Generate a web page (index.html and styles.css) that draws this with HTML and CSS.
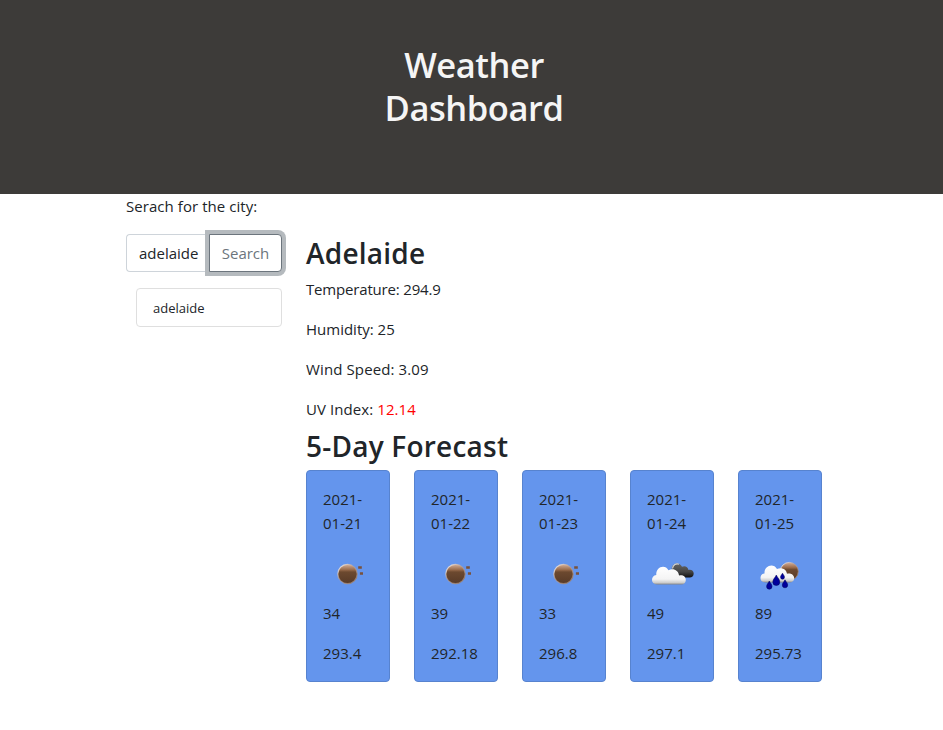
FILE: index.html
```html
<!DOCTYPE html>
<html lang="en">
<head>
<meta charset="utf-8">
<title>Weather Dashboard</title>
<link rel="stylesheet" href="styles.css">
</head>
<body>
<svg class="defs" width="0" height="0" aria-hidden="true">
  <defs>
    <linearGradient id="brown" x1="0" y1="0" x2="0" y2="1">
      <stop offset="0" stop-color="#d3b09b"/><stop offset=".28" stop-color="#9a6c4c"/><stop offset=".4" stop-color="#6c492f"/><stop offset="1" stop-color="#573a27"/>
    </linearGradient>
    <linearGradient id="rim" x1="0" y1="0" x2="1" y2="1">
      <stop offset="0" stop-color="#fff"/><stop offset=".45" stop-color="#c8a58e" stop-opacity=".5"/><stop offset="1" stop-color="#8d7464"/>
    </linearGradient>
    <linearGradient id="white" x1="0" y1="0" x2="0" y2="1">
      <stop offset="0" stop-color="#fff"/><stop offset=".7" stop-color="#f4f4f4"/><stop offset=".9" stop-color="#ccc"/><stop offset="1" stop-color="#888"/>
    </linearGradient>
    <linearGradient id="dark" x1="0" y1="0" x2="0" y2="1">
      <stop offset="0" stop-color="#666"/><stop offset=".6" stop-color="#444"/><stop offset="1" stop-color="#111"/>
    </linearGradient>
    <symbol id="sun" viewBox="0 0 50 50">
      <circle cx="24.500" cy="23" r="9.700" fill="url(#brown)" stroke="url(#rim)" stroke-width="1.200"/>
      <path d="M35.200 15.200h3.600v2.600h-3.600zM36.900 21.200h3.100v2.600h-3.100z" fill="#79523b"/>
    </symbol>
    <symbol id="clouds" viewBox="0 0 50 50">
      <path d="M25 19C24 15 27 12.500 30 12.500c2.500 0 4 1.300 5 3.200c3-1.500 6 .3 6.500 3.300c3-.7 5.200 1.100 5.200 3.500c0 2.500-1.700 4-4 4H32z" fill="url(#dark)"/>
      <path d="M25.500 17.500c.5-3.500 3.500-5.500 6.500-4.200" fill="none" stroke="#d5d5d5" stroke-width="1.200"/>
      <path d="M10 33.500C3.500 33.500 3.500 24.500 9.300 24C8.500 16 18 12.500 21.500 19.200C26 16.800 31.500 19 32 24.500C36.500 23.200 38.800 26 38.800 29C38.800 31.700 37 33.500 34.500 33.500z" fill="url(#white)"/>
    </symbol>
    <symbol id="rain" viewBox="0 0 50 50">
      <circle cx="34.300" cy="20.400" r="9" fill="url(#brown)" stroke="url(#rim)" stroke-width="1"/>
      <path d="M10.500 31.500C4 31.500 4 23 9.500 22.500C9 14.500 18.500 11.500 22 18C26.500 15.800 31.500 18 32 22.800C36.500 21.800 39.200 24.500 39.200 27.300C39.200 30 37.300 31.500 34.700 31.500z" fill="url(#white)"/>
      <path d="M14.300 30c1 2 2.700 3.600 2.700 5.500a2.700 2.700 0 0 1-5.400 0c0-1.900 1.700-3.500 2.700-5.500zM21.300 24c1.300 2.800 3.500 4.500 3.500 7a3.500 3.500 0 0 1-7 0c0-2.500 2.200-4.200 3.500-7zM27.500 22.200c.8 1.600 2 2.500 2 4a2 2 0 0 1-4 0c0-1.500 1.200-2.400 2-4zM30 28.800c1 2 2.700 3.400 2.700 5.300a2.700 2.700 0 0 1-5.400 0c0-1.900 1.700-3.300 2.700-5.300z" fill="#00009b" stroke="#000054" stroke-width=".5"/>
    </symbol>
  </defs>
</svg>
<header class="banner"><h1>Weather<br>Dashboard</h1></header>
<main class="container">
  <aside class="sidebar">
    <p>Serach for the city:</p>
    <div class="search">
      <input class="city" type="text" value="adelaide" aria-label="City">
      <button class="search-button" type="button">Search</button>
    </div>
    <ul class="history"><li>adelaide</li></ul>
  </aside>
  <section class="results">
    <h2>Adelaide</h2>
    <p class="temperature">Temperature: 294.9</p>
    <p>Humidity: 25</p>
    <p class="wind">Wind Speed: 3.09</p>
    <p class="uv">UV Index: <span class="severe">12.14</span></p>
    <h2>5-Day Forecast</h2>
    <div class="forecast">
      <article class="card"><p>2021-<br>01-21</p><svg class="icon"><use href="#sun"/></svg><p>34</p><p>293.4</p></article>
      <article class="card"><p>2021-<br>01-22</p><svg class="icon"><use href="#sun"/></svg><p>39</p><p>292.18</p></article>
      <article class="card"><p>2021-<br>01-23</p><svg class="icon"><use href="#sun"/></svg><p>33</p><p>296.8</p></article>
      <article class="card"><p>2021-<br>01-24</p><svg class="icon"><use href="#clouds"/></svg><p>49</p><p>297.1</p></article>
      <article class="card"><p>2021-<br>01-25</p><svg class="icon"><use href="#rain"/></svg><p>89</p><p>295.73</p></article>
    </div>
  </section>
</main>
</body>
</html>
```
FILE: styles.css
```css
* { box-sizing: border-box; }
body {
  margin: 0;
  background: #fff;
  color: #212529;
  font: 400 15px/24px "Open Sans", sans-serif;
}
.defs { display: block; height: 0; }
p { margin: 0 0 16px; }
h1, h2 { margin: 0; font-weight: 600; }
.banner {
  height: 194px;
  padding: 43px 0 0 5px;
  background: #3d3b39;
  color: #f5f5f5;
  text-align: center;
}
h1 { font-size: 34.5px; line-height: 43px; letter-spacing: -0.45px; }
h2 { font-size: 28px; line-height: 36px; margin-bottom: 6px; letter-spacing: 0.22px; }
.container { display: flex; gap: 24px; width: 696px; margin-left: 126px; }
.sidebar { width: 156px; flex: none; }
.sidebar p { letter-spacing: 0.06px; }
.search { display: flex; height: 38px; }
.city {
  width: 83px;
  padding: 6px 10px 6px 12px;
  border: 1px solid #ced4da;
  border-right: 0;
  border-radius: 4px 0 0 4px;
  background: #fff;
  color: #212529;
  font: inherit;
}
.search-button {
  width: 73px;
  padding: 0;
  border: 1px solid #6c757d;
  border-radius: 0 4px 4px 0;
  background: #fff;
  color: #6c757d;
  font: inherit;
  box-shadow: 0 0 0 4px #b5babe;
}
.history {
  margin: 16px 0 0 10px;
  padding: 0;
  list-style: none;
  font-size: 13px;
}
.history li { height: 39px; padding: 7px 16px; border: 1px solid #dfdfdf; border-radius: 4px; }
.results { width: 516px; padding-top: 41px; }
.results .temperature { letter-spacing: -0.18px; }
.results .wind { letter-spacing: 0.12px; }
.results .uv { margin-bottom: 7px; letter-spacing: 0.08px; }
.severe { color: red; }
.forecast { display: grid; grid-template-columns: repeat(5, 84px); gap: 24px; }
.card {
  height: 212px;
  padding: 16px;
  border: 1px solid #5783cf;
  border-radius: 4px;
  background: #6495ed;
}
.icon { display: block; width: 50px; height: 50px; }
```
